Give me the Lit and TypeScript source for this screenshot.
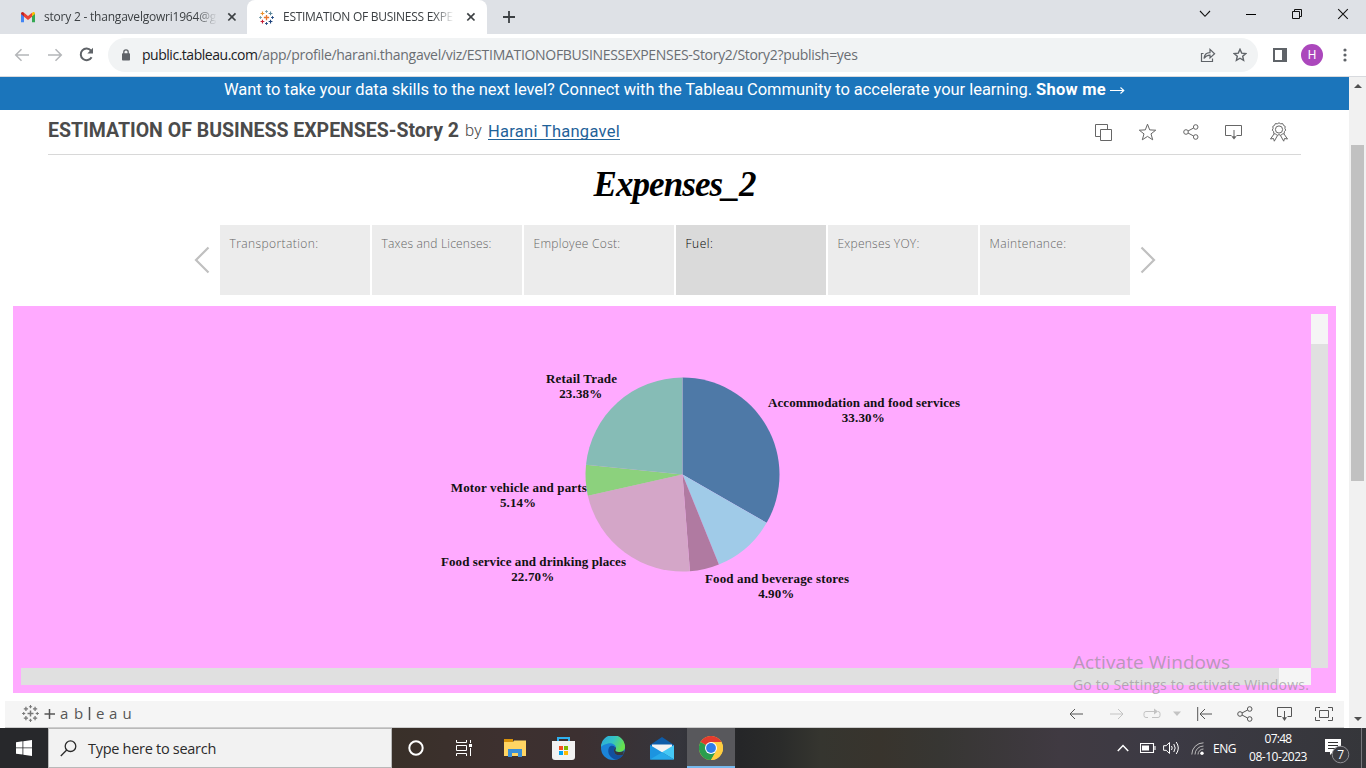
import { LitElement, html, svg, css } from "lit";
import { customElement, property } from "lit/decorators.js";

/** Text whose letter spacing is tuned so that it spans a given width. */
@customElement("fit-text")
class FitText extends LitElement {
  @property({ type: Number }) w = 0;
  static styles = css`
    :host { display: inline-block; white-space: nowrap; }
    .t { display: inline-block; white-space: pre; }
  `;
  render() { return html`<span class="t"><slot></slot></span>`; }
  firstUpdated() {
    const t = this.renderRoot.querySelector(".t") as HTMLElement;
    const n = (this.textContent || "").length;
    if (!this.w || n < 2) return;
    const natural = t.getBoundingClientRect().width;
    t.style.letterSpacing = `${(this.w - natural) / n}px`;
  }
}

const icon = (w: number, h: number, body: unknown, cls = "") =>
  html`<svg class="ic ${cls}" width=${w} height=${h} viewBox="0 0 ${w} ${h}" fill="none" stroke="currentColor">${body}</svg>`;

const plus = (x: number, y: number, r: number, c: string, sw = 1.2) =>
  svg`<path d="M${x - r} ${y}h${2 * r}M${x} ${y - r}v${2 * r}" stroke=${c} stroke-width=${sw} />`;

const tableauMark = (cs: string[], s: number) => {
  const k = s / 16;
  return svg`
  ${plus(8 * k, 8 * k, 2.8 * k, cs[0], 1.4 * k)}
  ${plus(8 * k, 1.6 * k, 1.5 * k, cs[1], k)}${plus(8 * k, 14.4 * k, 1.5 * k, cs[2], k)}
  ${plus(1.6 * k, 8 * k, 1.5 * k, cs[1], k)}${plus(14.4 * k, 8 * k, 1.5 * k, cs[2], k)}
  ${plus(3.7 * k, 3.7 * k, 2 * k, cs[3], 1.2 * k)}${plus(12.3 * k, 3.7 * k, 2 * k, cs[4], 1.2 * k)}
  ${plus(3.7 * k, 12.3 * k, 2 * k, cs[5], 1.2 * k)}${plus(12.3 * k, 12.3 * k, 2 * k, cs[2], 1.2 * k)}`;
};

const shareIcon = (cls = "") => icon(16, 16, svg`<circle cx="3" cy="8" r="2.3"/><circle cx="12.7" cy="3" r="2.3"/><circle cx="12.7" cy="13" r="2.3"/><path d="M5 7l5.6-3M5 9l5.6 3"/>`, cls);
const downloadIcon = () => icon(18, 16, svg`<path d="M6.5 11.5H.5V1.5H16.5V11.500H11.5M9 6v8"/><path d="M6.300 12.200h5.400L9 15.500z" fill="currentColor" stroke="none"/>`);

const SLICES = [
  { pct: 33.3, color: "#4e79a7" },
  { pct: 10.58, color: "#a0cbe8" },
  { pct: 4.9, color: "#b07aa1" },
  { pct: 22.7, color: "#d4a6c8" },
  { pct: 5.14, color: "#8cd17d" },
  { pct: 23.38, color: "#86bcb6" },
];

const LABELS = [
  { x: 581.5, y: 383, w: 71, name: "Retail Trade", pct: "23.38%", pw: 43 },
  { x: 864, y: 407, w: 192, name: "Accommodation and food services", pct: "33.30%", pw: 43 },
  { x: 518.8, y: 492, w: 136, name: "Motor vehicle and parts", pct: "5.14%", pw: 36 },
  { x: 533.5, y: 566, w: 185, name: "Food service and drinking places", pct: "22.70%", pw: 43 },
  { x: 777, y: 583, w: 144, name: "Food and beverage stores", pct: "4.90%", pw: 36 },
];

const STORY = [
  { t: "Transportation:", w: 89 },
  { t: "Taxes and Licenses:", w: 110 },
  { t: "Employee Cost:", w: 87 },
  { t: "Fuel:", w: 28, on: true },
  { t: "Expenses YOY:", w: 82 },
  { t: "Maintenance:", w: 77 },
];

@customElement("app-root")
class AppRoot extends LitElement {
  static styles = css`
    :host { display: flex; flex-direction: column; width: 1366px; height: 768px; overflow: hidden; background: #fff; font-family: "Open Sans", "Noto Sans", sans-serif; color: #3c4043; }
    * { box-sizing: border-box; }
    svg { display: block; flex: none; }
    .tabs { height: 34px; background: #dee1e6; display: flex; flex: none; font-size: 12px; line-height: 34px; }
    .tab { display: flex; align-items: center; height: 34px; }
    .tab1 { width: 247px; padding-left: 20px; }
    .tab2 { width: 240px; background: #fff; border-radius: 8px 8px 0 0; padding-left: 12px; }
    .label { white-space: nowrap; -webkit-mask-image: linear-gradient(90deg, #000 88%, transparent); mask-image: linear-gradient(90deg, #000 88%, transparent); }
    .l1 { width: 173px; margin-left: 8px; }
    .l2 { width: 171px; margin-left: 9px; }
    .tab .x { margin-left: 10px; }
    .tab2 .x { margin-left: 12px; }
    .new { margin: 11px 0 0 16px; color: #3c4043; }
    .win { margin-left: auto; display: flex; gap: 32px; align-items: center; height: 28px; padding-right: 17px; color: #111; }
    .win .restore { margin-right: 2px; }
    .bar { height: 43px; flex: none; display: flex; align-items: center; border-bottom: 1px solid #d8dade; padding: 0 14px 1px 14px; color: #5f6368; }
    .bar .dim { color: #b4b6b9; }
    .bar > .ic { margin-right: 17px; }
    .bar > .reload { margin: 0 18px 0 -1px; }
    .omni { height: 34px; width: 1150px; border-radius: 17px; background: #f1f3f4; display: flex; align-items: center; padding: 0 11px 0 13px; margin-left: -4px; }
    .url { font-size: 14px; margin-left: 11px; color: #6a6e73; white-space: nowrap; line-height: 20px; }
    .url .host { color: #202124; }
    .omni .share { margin-left: auto; margin-right: 17px; }
    .side { margin: 0 14px 0 15px; }
    .avatar { width: 22px; height: 22px; border-radius: 50%; background: #ab47bc; color: #fff; font: 12px/22px Roboto, sans-serif; text-align: center; margin-right: 20px; }
    .view { height: 651px; flex: none; display: flex; }
    .page { width: 1349px; display: flex; flex-direction: column; }
    .scroll { width: 17px; background: #f1f1f1; display: flex; flex-direction: column; align-items: center; color: #505050; padding: 7px 0; }
    .thumb { width: 13px; height: 336px; background: #c1c1c1; margin-top: 57px; }
    .scroll .down { margin-top: auto; }
    .banner { height: 33px; flex: none; background: #1b75bb; color: #fff; font: 16.5px/25px Roboto, sans-serif; display: flex; padding-left: 224px; white-space: nowrap; }
    .banner b { font-weight: 700; }
    .banner .sm { margin-left: 4px; }
    .banner .arr { margin: 9px 0 0 4px; }
    .head { height: 45px; margin: 0 48px; border-bottom: 1px solid #d8d8d8; flex: none; display: flex; align-items: center; padding: 0 12px 2px 0; }
    .title { font: 700 19.5px/24px Roboto, sans-serif; color: #4b4b4b; }
    .by { font: 300 16.5px/24px Roboto, sans-serif; color: #4b4b4b; margin-left: 6px; }
    .author { font: 16.5px/19px Roboto, sans-serif; color: #1f6299; margin-left: 6px; border-bottom: 1px solid #1f6299; height: 18px; }
    .acts { margin-left: auto; display: flex; align-items: center; gap: 26px; color: #666; padding-top: 2px; }
    .story { height: 70px; flex: none; text-align: center; font: italic 700 35px/59px "Z003", "URW Chancery L", "Liberation Serif", serif; color: #000; }
    .nav { height: 70px; flex: none; display: flex; align-items: center; padding-left: 194px; color: #c0c0c0; }
    .points { display: flex; gap: 2px; margin: 0 10px; }
    .pt { width: 150px; height: 70px; background: #ececec; color: #666; font-weight: 300; font-size: 12px; line-height: 18px; padding: 10px 9.5px; }
    .pt.on { background: #dadada; color: #000; }
    .sheet { flex: none; margin: 11px 13px 0; height: 387px; background: #ffaaff; padding: 8px; display: grid; grid-template: 354px 17px / 1290px 17px; }
    .vs { background: #e0e0e0; }
    .vs i { display: block; height: 30px; background: #f5f5f5; }
    .hs { background: #e0e0e0; display: flex; justify-content: flex-end; }
    .hs i { width: 32px; background: #f5f5f5; }
    .chart text { font: 700 13px "Liberation Serif", serif; fill: #111; stroke: none; }
    .tb { height: 27px; flex: none; margin: 8px 5px 0; background: #f5f5f5; border-bottom: 1px solid #ccc; display: flex; align-items: center; padding: 0 11px 1px 17px; color: #555; }
    .tb .dim { color: #c3c3c3; }
    .brand { margin-left: 5px; }
    .brand text { font: 15px "Open Sans", sans-serif; fill: #555; stroke: none; }
    .tools { margin-left: auto; display: flex; align-items: center; }
    .t2 { margin-left: 27px; }
    .t3 { margin-left: 19px; }
    .t4 { margin-left: 12px; }
    .t5 { margin-left: 16px; }
    .t6 { margin-left: 25px; }
    .t7 { margin-left: 22px; }
    .t8 { margin-left: 22px; }
    .mark { position: absolute; left: 1073px; top: 650px; color: rgba(140, 140, 140, 0.62); display: flex; flex-direction: column; }
    .mark .a { font-size: 19px; line-height: 25px; }
    .mark .b { font-size: 14px; line-height: 19px; }
    .task { height: 40px; flex: none; display: flex; color: #fff; background: linear-gradient(90deg, #393029 392px, #3d302f 500px, #3c3031 580px, #35353c 680px, #252628 740px, #2a2b2a 780px, #35352f 820px, #38342d 880px, #373633 940px, #403a42 1060px, #3c3a44 1170px, #35363a 1366px); }
    .start { width: 48px; background: #27282b; display: grid; place-items: center; }
    .search { width: 344px; background: #f2f2f2; border: 1px solid #b9b9b9; color: #2b2b2b; font-size: 14.5px; display: flex; align-items: center; padding-left: 11px; }
    .search fit-text { margin-left: 11px; }
    .cell { width: 48px; display: grid; place-items: center; }
    .cell.wide { width: 49px; }
    .cell.first { margin-left: 2px; }
    .cell.active { width: 48px; margin-left: 1px; background: #58585c; border-bottom: 2px solid #76b9ed; padding-top: 1px; }
    .tray { margin-left: auto; display: flex; align-items: center; font-size: 12px; }
    .y2 { margin-left: 11px; }
    .y3 { margin-left: 7px; }
    .y4 { margin-left: 11px; }
    .y5 { margin-left: 9px; }
    .y6 { margin-left: 12px; }
    .y7 { margin-left: 16px; }
    .clock { width: 60px; display: flex; flex-direction: column; align-items: center; line-height: 18px; padding-bottom: 1px; }
    .edge { width: 1px; height: 40px; background: #77777c; margin-left: 11px; margin-right: 4px; }
    .note { margin-top: 6px; }
    .note text { font: 12px "Open Sans", sans-serif; }
  `;

  private pie() {
    const cx = 682.5 - 21, cy = 474.5 - 314, r = 97;
    let acc = 0;
    const at = (f: number) => {
      const a = f * 2 * Math.PI;
      return `${(cx + r * Math.sin(a)).toFixed(2)} ${(cy - r * Math.cos(a)).toFixed(2)}`;
    };
    return SLICES.map((s) => {
      const from = at(acc / 100);
      acc += s.pct;
      return svg`<path d="M${cx} ${cy}L${from}A${r} ${r} 0 0 1 ${at(acc / 100)}Z" fill=${s.color} stroke="none"/>`;
    });
  }

  render() {
    const close = icon(10, 10, svg`<path d="M1.3 1.3l7.2 7.2M8.5 1.3L1.3 8.5" stroke-width="1.7"/>`, "x");
    return html`
      <div class="tabs">
        <div class="tab tab1">
          ${icon(16, 12, svg`<g stroke="none"><path d="M1 2.2V11.3h3V5z" fill="#4285f4"/><path d="M12 5v6.3h3V2.2z" fill="#34a853"/><path d="M12 2v3.2l3-2.2C15 .8 13.4.6 12.5 1.4z" fill="#fbbc04"/><path d="M4 1.8l4 3.2 4-3.2v4L8 9 4 5.8z" fill="#ea4335"/><path d="M1 3l3 2.4V1.8C2.5.4 1 1.2 1 3z" fill="#c5221f"/></g>`)}
          <div class="label l1"><fit-text w="172">story 2 - thangavelgowri1964@g</fit-text></div>${close}
        </div>
        <div class="tab tab2">
          ${icon(15, 15, tableauMark(["#e8762d", "#7099a6", "#1f457e", "#eb912c", "#5b879b", "#c72037"], 15))}
          <div class="label l2"><fit-text w="170">ESTIMATION OF BUSINESS EXPE</fit-text></div>${close}
        </div>
        ${icon(12, 12, svg`<path d="M6 0v12M0 6h12" stroke-width="1.8"/>`, "new")}
        <div class="win">
          ${icon(12, 8, svg`<path d="M1 1l5 5.3L11 1" stroke-width="1.1"/>`)}
          <svg width="16" height="12" viewBox="0 0 16 12" stroke="#000"><path d="M3 6.5h10"/></svg>
          ${icon(12, 12, svg`<path d="M1.5 3.5h7v7h-7zM3.5 3V1.5h7v7H9"/>`, "restore")}
          ${icon(12, 12, svg`<path d="M1.2 1.2l9.6 9.6M10.8 1.2L1.2 10.8" stroke-width="1.1"/>`)}
        </div>
      </div>
      <div class="bar">
        ${icon(16, 14, svg`<path d="M15 7H2M7.5 1.2L1.7 7l5.8 5.8" stroke-width="1.5"/>`, "dim")}
        ${icon(16, 14, svg`<path d="M1 7h13M8.5 1.2L14.3 7l-5.8 5.8" stroke-width="1.5"/>`, "dim")}
        ${icon(15, 15, svg`<path d="M12.6 10.2A5.8 5.8 0 1 1 12 3.6" stroke-width="2"/><path d="M14 .8v5.7H8.3z" fill="currentColor" stroke="none"/>`, "reload")}
        <div class="omni">
          ${icon(10, 12, svg`<rect x="1" y="4.3" width="8" height="7.2" rx=".8" fill="currentColor" stroke="none"/><path d="M2.8 5V3a2.2 2.2 0 0 1 4.4 0v2" stroke-width="1.3"/>`)}
          <div class="url"><fit-text class="host" w="115.5">public.tableau.com</fit-text><fit-text w="600">/app/profile/harani.thangavel/viz/ESTIMATIONOFBUSINESSEXPENSES-Story2/Story2?publish=yes</fit-text></div>
          ${icon(16, 14, svg`<path d="M3.5 5.5H1.5v8h11v-3" stroke-width="1.2"/><path d="M4 10.5c.4-3.6 2.5-5.8 6-5.8V1.4l4.6 4.4L10 10V7.2C7.4 7.2 5.7 8 4 10.5z" stroke-width="1.2"/>`, "share")}
          ${icon(14, 14, svg`<path d="M7 1.3l1.7 3.8 4.1.4-3.1 2.7.9 4.1L7 10.2l-3.6 2.1.9-4.1L1.2 5.5l4.1-.4z" stroke-width="1.4"/>`)}
        </div>
        <svg class="side" width="14" height="14" viewBox="0 0 14 14"><path d="M1 1h12v12H1z" fill="none" stroke="#5f6368" stroke-width="2"/><path d="M9 0h5v14H9z" fill="#5f6368"/></svg>
        <div class="avatar">H</div>
        <svg width="4" height="14" viewBox="0 0 4 14" fill="#5f6368"><circle cx="2" cy="2" r="1.6"/><circle cx="2" cy="7" r="1.6"/><circle cx="2" cy="12" r="1.6"/></svg>
      </div>
      <div class="view">
        <div class="page">
          <div class="banner">
            <fit-text w="808">Want to take your data skills to the next level? Connect with the Tableau Community to accelerate your learning.</fit-text>
            <b class="sm"><fit-text w="70">Show me</fit-text></b>
            ${icon(15, 9, svg`<path d="M0 4.5h14M10.5 1.5l3.3 3-3.3 3" stroke-width="1.1"/>`, "arr")}
          </div>
          <div class="head">
            <fit-text class="title" w="411">ESTIMATION OF BUSINESS EXPENSES-Story 2</fit-text>
            <fit-text class="by" w="17">by</fit-text>
            <fit-text class="author" w="132">Harani Thangavel</fit-text>
            <div class="acts">
              ${icon(17, 17, svg`<path d="M5.5 5.5h11v11h-11zM5 12.5H.5V.5h12V5"/>`)}
              ${icon(19, 18, svg`<path d="M9.5 1.2l2.2 5.7 6 .3-4.7 3.7 1.7 5.9-5.2-3.4-5.2 3.4L6 10.9 1.3 7.200l6-.3z"/>`)}
              ${shareIcon()}
              ${downloadIcon()}
              ${icon(20, 20, svg`<circle cx="10" cy="7.5" r="3.6"/><path d="M10 .8l1.7 1 2-.2.8 1.8 1.7 1-.3 2 .8 1.7-1.3 1.5-.2 2-1.9.5-1.5 1.3L10 12.6l-1.8.8-1.5-1.3-1.9-.5-.2-2L3.300 8.100l.8-1.700-.3-2 1.700-1 .8-1.800 2 .2zM5 12l-3.500 5 3-.5.8 2.700L8.500 13.500M15 12l3.500 5-3-.5-.8 2.700-3.200-5.700"/>`)}
            </div>
          </div>
          <div class="story"><fit-text w="162">Expenses_2</fit-text></div>
          <div class="nav">
            ${icon(16, 28, svg`<path d="M14.5 1.5L2 14l12.5 12.5" stroke-width="2.2"/>`)}
            <div class="points">${STORY.map((p) => html`<div class="pt ${p.on ? "on" : ""}"><fit-text w=${p.w}>${p.t}</fit-text></div>`)}</div>
            ${icon(16, 28, svg`<path d="M1.5 1.5L14 14 1.5 26.5" stroke-width="2.2"/>`)}
          </div>
          <div class="sheet">
            <svg class="chart" width="1290" height="354" viewBox="0 0 1290 354">
              ${this.pie()}
              ${LABELS.map((l) => svg`
                <text x=${l.x - l.w / 2 - 21} y=${l.y - 314} textLength=${l.w}>${l.name}</text>
                <text x=${l.x - l.pw / 2 - 21.8} y=${l.y - 299} textLength=${l.pw}>${l.pct}</text>`)}
            </svg>
            <div class="vs"><i></i></div>
            <div class="hs"><i></i></div>
          </div>
          <div class="tb">
            ${icon(17, 17, tableauMark(Array(6).fill("#777"), 17))}
            ${icon(92, 18, svg`<path d="M5.5 4v10M.5 9h10.500M45.500 2v13" stroke-width="1.500"/><text x="16 30 52 65 78.500" y="14.300">abeau</text>`, "brand")}
            <div class="tools">
              ${icon(14, 12, svg`<path d="M14 6H1M6 1L1 6l5 5"/>`)}
              ${icon(14, 12, svg`<path d="M0 6h13M8 1l5 5-5 5"/>`, "dim t2")}
              ${icon(18, 12, svg`<path d="M5 9.5H3a2 2 0 0 1-2-2v-2a2 2 0 0 1 2-2h9M9 9.5h6a2 2 0 0 0 2-2v-2a2 2 0 0 0-2-2"/><path d="M11 .5l4 3-4 3z" fill="currentColor" stroke="none"/>`, "dim t3")}
              ${icon(8, 5, svg`<path d="M0 .5h8L4 5z" fill="currentColor" stroke="none"/>`, "dim t4")}
              ${icon(15, 14, svg`<path d="M.7 0v14M15 7H3M8 2L3 7l5 5" />`, "t5")}
              ${shareIcon("t6")}
              ${icon(18, 16, svg`<path d="M6.5 10.5H2.5V1.5H16.5V10.5H12.5M9.5 5v8"/><path d="M7 11.2h5L9.5 15z" fill="currentColor" stroke="none"/>`, "t7")}
              ${icon(18, 14, svg`<path d="M4.5 3.5h9v7h-9zM.5 4V.5H5M13 .5h4.5V4M17.5 10v3.5H13M5 13.5H.5V10"/>`, "t8")}
            </div>
          </div>
        </div>
        <div class="scroll">
          ${icon(8, 4, svg`<path d="M0 4h8L4 0z" fill="currentColor" stroke="none"/>`)}
          <div class="thumb"></div>
          ${icon(8, 4, svg`<path d="M0 0h8L4 4z" fill="currentColor" stroke="none"/>`, "down")}
        </div>
      </div>
      <div class="task">
        <div class="start"><svg width="16" height="16" viewBox="0 0 16 16" fill="#fff"><path d="M0 2.2L6.5 1.3v6.2H0zM7.3 1.2L16 0v7.5H7.3zM0 8.3h6.5v6.2L0 13.7zM7.3 8.3H16V16l-8.7-1.2z"/></svg></div>
        <div class="search">
          ${icon(17, 17, svg`<circle cx="10.5" cy="6.2" r="5.3" stroke-width="1.3"/><path d="M6.7 10L.8 16" stroke-width="1.3"/>`)}
          <fit-text w="128">Type here to search</fit-text>
        </div>
        <div class="cell">${icon(16, 16, svg`<circle cx="8" cy="8" r="6.7" stroke-width="2"/>`)}</div>
        <div class="cell">${icon(16, 16, svg`<path d="M.5 0v2.500h10V0M.5 5.500h10v5H.5zM.5 16v-2.500h10V16M14.500 0v3M14.500 8v8"/><path d="M13 4h3v3h-3z" fill="#fff" stroke="none"/>`)}</div>
        <div class="cell wide first"><svg width="22" height="18" viewBox="0 0 22 18"><path d="M0 0h9v3H0z" fill="#d9920a"/><path d="M0 3h9l1-1.500h12V17H0z" fill="#ffd563"/><path d="M4 18v-8h14v8h-4v-4H8v4z" fill="#3a8fd6"/></svg></div>
        <div class="cell wide"><svg width="23" height="23" viewBox="0 0 23 23"><path d="M6 6V1h11v5" fill="none" stroke="#2fb1f0" stroke-width="2"/><path d="M0 4h23v16a3 3 0 0 1-3 3H3a3 3 0 0 1-3-3z" fill="#f2f2f2"/><path d="M7 9h4v4H7z" fill="#f25022"/><path d="M12 9h4v4h-4z" fill="#7fba00"/><path d="M7 14h4v4H7z" fill="#00a4ef"/><path d="M12 14h4v4h-4z" fill="#ffb900"/></svg></div>
        <div class="cell wide"><svg width="24" height="24" viewBox="0 0 24 24"><defs><linearGradient id="eg" x1="0" x2="1" y1="0" y2=".4"><stop offset="0" stop-color="#2aa6e0"/><stop offset=".55" stop-color="#35c3c4"/><stop offset="1" stop-color="#66e04e"/></linearGradient></defs><circle cx="12" cy="12" r="12" fill="#1b84d8"/><path d="M0 11A12 12 0 0 1 24 11c.2 4-3.5 5.2-6.5 5-2.5-.2-3.5-1-3-2.3C16.5 9 11 6.5 7 7.5 3.5 8.2 1 9.5 0 11z" fill="url(#eg)"/><path d="M8 11.5C5.5 17 9.5 22.5 15 23.6c3.5-.6 6-2.6 7.5-5.1-4.5 2-9.5.5-9.5-4 0-2 1-2.5 1-3.5-2-2-5-1.5-6 .5z" fill="#124f9e"/><path d="M14.5 13.7c-.5 1.3.5 2.1 3 2.300 2 .1 4-.4 5.300-1.600L22.500 18.500c-4.500 2-9.500.5-9.500-4 0-1.500 1-2.500 1.200-3.500.7.8.8 1.700.3 2.700z" fill="#36363c"/></svg></div>
        <div class="cell wide"><svg width="24" height="23" viewBox="0 0 24 23"><path d="M0 8l12-8 12 8v3H0z" fill="#0e5ca8"/><path d="M2 7.500h20v8H2z" fill="#f3f3f3"/><path d="M0 8l24 14.500H0z" fill="#1c94e0"/><path d="M24 8v14.500L12 15.200z" fill="#45c8f5"/><path d="M0 22.500h24L12 15.300z" fill="#27a9ea"/></svg></div>
        <div class="cell active"><svg width="24" height="24" viewBox="0 0 24 24"><circle cx="12" cy="12" r="12" fill="#ffcd40"/><path d="M12 12L1.600 6A12 12 0 0 1 22.400 6H12z" fill="#e33b2e"/><path d="M12 12L1.600 6A12 12 0 0 0 12 24l5.200-9z" fill="#2a9d4e"/><path d="M12 6h10.400A12 12 0 0 1 12 24l5.200-9z" fill="#ffcd40"/><circle cx="12" cy="12" r="6" fill="#fff"/><circle cx="12" cy="12" r="4.900" fill="#2f7de8"/></svg></div>
        <div class="tray">
          ${icon(12, 8, svg`<path d="M.8 7L6 1.5 11.2 7" stroke-width="1.5"/>`, "y1")}
          ${icon(16, 10, svg`<path d="M.5 .5h13v9H.5zM15 3v4" stroke-width="1.1"/><path d="M2 2.5h7v5H2z" fill="#fff" stroke="none"/>`, "y2")}
          ${icon(17, 14, svg`<path d="M.6 4.7h2.6L6.5 1.5v11L3.2 9.3H.6zM8.5 5q1.4 2 0 4M10.8 3q2.8 4 0 8M13.2 1q4.2 6 0 12"/>`, "y3")}
          ${icon(13, 13, svg`<g stroke="#bbb"><path d="M.8 12.5A11.7 11.7 0 0 1 12.5.8M4 12.5A8.5 8.5 0 0 1 12.5 4M7 12.5A5.5 5.5 0 0 1 12.5 7"/></g><circle cx="11" cy="11.3" r="1.7" fill="#fff" stroke="none"/>`, "y4")}
          <fit-text class="y5" w="23">ENG</fit-text>
          <div class="clock y6"><fit-text w="27">07:48</fit-text><fit-text w="58">08-10-2023</fit-text></div>
          <svg class="note y7" width="26" height="26" viewBox="0 0 26 26"><path d="M1 1h16v13H9l-3 3v-3H1z" fill="#fff"/><path d="M4 4.5h10M4 7.5h10M4 10.5h7" stroke="#333"/><circle cx="16.5" cy="16.5" r="8.3" fill="#3b3b40" stroke="#909095"/><text x="13.3" y="21" fill="#fff">7</text></svg>
          <div class="edge"></div>
        </div>
      </div>
      <div class="mark"><fit-text class="a" w="157">Activate Windows</fit-text><fit-text class="b" w="236">Go to Settings to activate Windows.</fit-text></div>
    `;
  }
}
